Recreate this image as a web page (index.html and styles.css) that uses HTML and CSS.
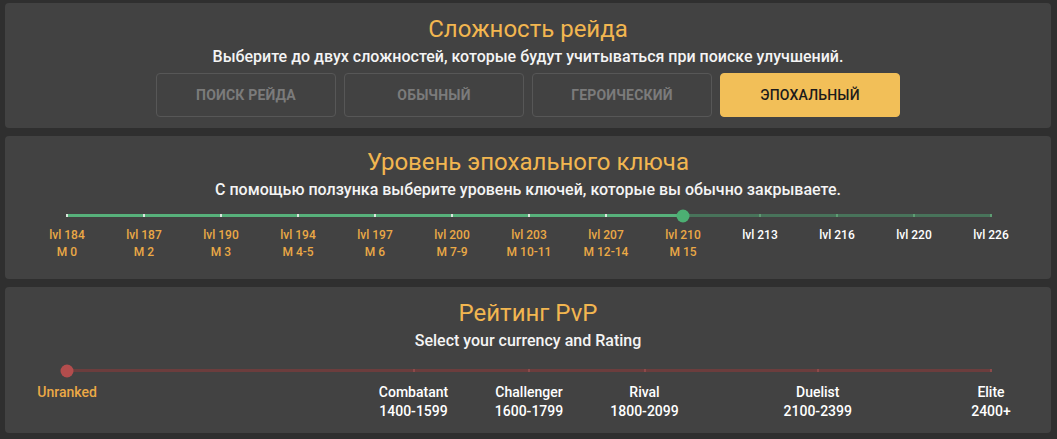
FILE: index.html
```html
<!DOCTYPE html>
<html lang="ru">
<head>
<meta charset="utf-8">
<title>Настройки</title>
<link rel="stylesheet" href="styles.css">
</head>
<body>
<section class="panel panel-diff">
  <h2 class="title">Сложность рейда</h2>
  <p class="subtitle">Выберите до двух сложностей, которые будут учитываться при поиске улучшений.</p>
  <div class="btn-row">
    <button class="btn">Поиск рейда</button>
    <button class="btn">Обычный</button>
    <button class="btn">Героический</button>
    <button class="btn btn-active">Эпохальный</button>
  </div>
</section>

<section class="panel">
  <h2 class="title">Уровень эпохального ключа</h2>
  <p class="subtitle">С помощью ползунка выберите уровень ключей, которые вы обычно закрываете.</p>
  <div class="slider slider-key">
    <div class="track track-key">
      <div class="fill fill-key" style="width:66.6667%"></div>
      <span class="tick tick-on" style="left:0%"></span>
      <span class="tick tick-on" style="left:8.3333%"></span>
      <span class="tick tick-on" style="left:16.6667%"></span>
      <span class="tick tick-on" style="left:25%"></span>
      <span class="tick tick-on" style="left:33.3333%"></span>
      <span class="tick tick-on" style="left:41.6667%"></span>
      <span class="tick tick-on" style="left:50%"></span>
      <span class="tick tick-on" style="left:58.3333%"></span>
      <span class="tick tick-off" style="left:75%"></span>
      <span class="tick tick-off" style="left:83.3333%"></span>
      <span class="tick tick-off" style="left:91.6667%"></span>
      <span class="tick tick-off" style="left:100%"></span>
      <span class="handle handle-key" style="left:66.6667%"></span>
    </div>
    <div class="marks marks-key">
      <div class="mark mark-on" style="left:0%">lvl 184<br>M 0</div>
      <div class="mark mark-on" style="left:8.3333%">lvl 187<br>M 2</div>
      <div class="mark mark-on" style="left:16.6667%">lvl 190<br>M 3</div>
      <div class="mark mark-on" style="left:25%">lvl 194<br>M 4-5</div>
      <div class="mark mark-on" style="left:33.3333%">lvl 197<br>M 6</div>
      <div class="mark mark-on" style="left:41.6667%">lvl 200<br>M 7-9</div>
      <div class="mark mark-on" style="left:50%">lvl 203<br>M 10-11</div>
      <div class="mark mark-on" style="left:58.3333%">lvl 207<br>M 12-14</div>
      <div class="mark mark-on" style="left:66.6667%">lvl 210<br>M 15</div>
      <div class="mark" style="left:75%">lvl 213</div>
      <div class="mark" style="left:83.3333%">lvl 216</div>
      <div class="mark" style="left:91.6667%">lvl 220</div>
      <div class="mark" style="left:100%">lvl 226</div>
    </div>
  </div>
</section>

<section class="panel">
  <h2 class="title">Рейтинг PvP</h2>
  <p class="subtitle">Select your currency and Rating</p>
  <div class="slider slider-pvp">
    <div class="track track-pvp">
      <span class="tick tick-red" style="left:37.5%"></span>
      <span class="tick tick-red" style="left:50%"></span>
      <span class="tick tick-red" style="left:62.5%"></span>
      <span class="tick tick-red" style="left:81.25%"></span>
      <span class="tick tick-red" style="left:100%"></span>
      <span class="handle handle-pvp" style="left:0%"></span>
    </div>
    <div class="marks marks-pvp">
      <div class="mark mark-on" style="left:0%">Unranked</div>
      <div class="mark" style="left:37.5%">Combatant<br>1400-1599</div>
      <div class="mark" style="left:50%">Challenger<br>1600-1799</div>
      <div class="mark" style="left:62.5%">Rival<br>1800-2099</div>
      <div class="mark" style="left:81.25%">Duelist<br>2100-2399</div>
      <div class="mark" style="left:100%">Elite<br>2400+</div>
    </div>
  </div>
</section>
</body>
</html>
```

FILE: styles.css
```css
html, body {
  margin: 0;
  background: #2f2f2f;
}

body {
  padding: 3px 6px 6px 5px;
  font-family: Roboto, "Noto Sans", "Liberation Sans", sans-serif;
  color: #f2f2f2;
}

.panel {
  background: #424242;
  border-radius: 4px;
  padding: 12px 0 0;
  margin-bottom: 8px;
  text-align: center;
}

.panel-diff {
  padding-bottom: 11px;
}

.title {
  margin: 0;
  font-size: 24px;
  line-height: 28px;
  font-weight: 400;
  color: #f2b650;
}

.subtitle {
  margin: 4px 0 0;
  font-size: 16px;
  line-height: 20px;
  font-weight: 500;
  color: #f4f4f4;
}

.btn-row {
  display: flex;
  justify-content: center;
  gap: 8px;
  margin-top: 6px;
}

.btn {
  width: 180px;
  height: 44px;
  box-sizing: border-box;
  border: 1px solid #575757;
  border-radius: 4px;
  background: transparent;
  color: #7b7b7b;
  font-family: Roboto, "Noto Sans", "Liberation Sans", sans-serif;
  font-size: 14px;
  font-weight: 700;
  text-transform: uppercase;
  letter-spacing: 0.2px;
  padding: 0;
}

.btn-active {
  background: #f2bf58;
  border-color: #f2bf58;
  color: #1b1b1b;
  font-weight: 500;
}

.slider {
  margin: 0 60px 0 62px;
}

.slider-key {
  padding: 14px 0 18px;
}

.slider-pvp {
  padding: 18px 0 12px;
}

.track {
  position: relative;
  height: 3px;
}

.track-key {
  background: #48735a;
}

.track-pvp {
  background: #6c3d3d;
}

.fill {
  height: 100%;
}

.fill-key {
  background: #57b17b;
}

.tick {
  position: absolute;
  top: 0;
  width: 2px;
  height: 3px;
  margin-left: -1px;
}

.tick-on {
  background: #d9e6dc;
}

.tick-off {
  background: #5d9c72;
}

.tick-red {
  background: #8c4a4a;
}

.handle {
  position: absolute;
  top: 50%;
  width: 13px;
  height: 13px;
  border-radius: 50%;
  transform: translate(-50%, -50%);
}

.handle-key {
  background: #4caf73;
}

.handle-pvp {
  background: #b34d4d;
}

.marks {
  position: relative;
}

.marks-key {
  margin-top: 10px;
  height: 34px;
  font-size: 12px;
  line-height: 17px;
}

.marks-pvp {
  margin-top: 11px;
  height: 38px;
  font-size: 14px;
  line-height: 19px;
}

.mark {
  position: absolute;
  top: 0;
  transform: translateX(-50%);
  white-space: nowrap;
  font-weight: 500;
  color: #ffffff;
  text-align: center;
}

.mark-on {
  color: #eba946;
}
```
